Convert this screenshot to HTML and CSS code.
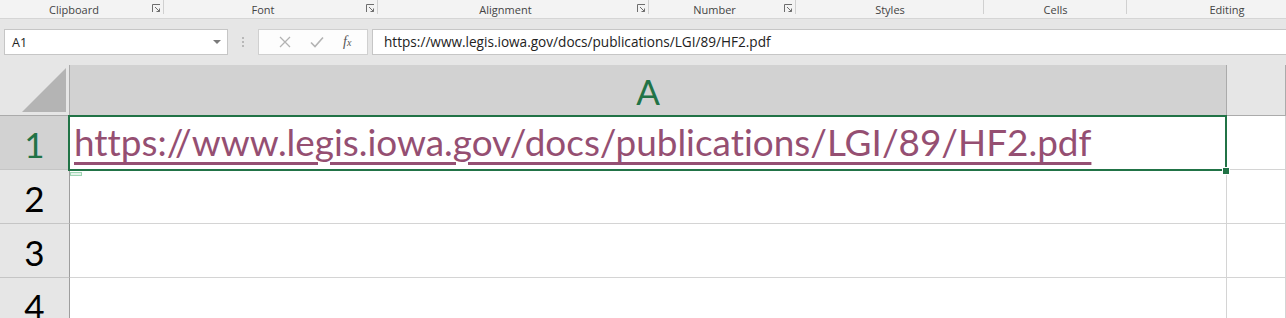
FILE: index.html
```html
<!DOCTYPE html>
<html lang="en">

<head>
  <meta charset="UTF-8">
  <title>Book1 - Excel</title>
  <link rel="stylesheet" href="styles.css">
</head>

<body>
  <!-- ribbon group labels -->
  <div class="ribbon-labels">
    <div class="group g-clipboard"><span class="label">Clipboard</span>
      <svg class="launcher" width="9" height="9" viewBox="0 0 9 9"><path d="M0.5 8V0.5H8" fill="none" stroke="#6d6d6d"/><path d="M3 3L7.5 7.5M7.5 4.5V7.5H4.5" fill="none" stroke="#6d6d6d"/></svg>
    </div>
    <div class="group g-font"><span class="label">Font</span>
      <svg class="launcher" width="9" height="9" viewBox="0 0 9 9"><path d="M0.5 8V0.5H8" fill="none" stroke="#6d6d6d"/><path d="M3 3L7.5 7.5M7.5 4.5V7.5H4.5" fill="none" stroke="#6d6d6d"/></svg>
    </div>
    <div class="group g-alignment"><span class="label">Alignment</span>
      <svg class="launcher" width="9" height="9" viewBox="0 0 9 9"><path d="M0.5 8V0.5H8" fill="none" stroke="#6d6d6d"/><path d="M3 3L7.5 7.5M7.5 4.5V7.5H4.5" fill="none" stroke="#6d6d6d"/></svg>
    </div>
    <div class="group g-number"><span class="label">Number</span>
      <svg class="launcher" width="9" height="9" viewBox="0 0 9 9"><path d="M0.5 8V0.5H8" fill="none" stroke="#6d6d6d"/><path d="M3 3L7.5 7.5M7.5 4.5V7.5H4.5" fill="none" stroke="#6d6d6d"/></svg>
    </div>
    <div class="group g-styles"><span class="label">Styles</span></div>
    <div class="group g-cells"><span class="label">Cells</span></div>
    <div class="group g-editing"><span class="label">Editing</span></div>
  </div>

  <!-- formula bar -->
  <div class="formula-bar">
    <div class="name-box">
      <span>A1</span>
      <svg class="caret" width="8" height="4" viewBox="0 0 8 4"><path d="M0 0H8L4 4Z" fill="#7a7a7a"/></svg>
    </div>
    <div class="grip"><i></i><i></i><i></i></div>
    <div class="fx-box">
      <svg width="12" height="12" viewBox="0 0 12 12"><path d="M1 1L11 11M11 1L1 11" stroke="#b3b3b3" stroke-width="1.3"/></svg>
      <svg width="14" height="12" viewBox="0 0 14 12"><path d="M1 6.5L5 10.5L13 1.5" fill="none" stroke="#b3b3b3" stroke-width="1.6"/></svg>
      <span class="fx">f<small>x</small></span>
    </div>
    <div class="formula-input">https://www.legis.iowa.gov/docs/publications/LGI/89/HF2.pdf</div>
  </div>

  <!-- worksheet -->
  <div class="sheet">
    <div class="corner"><span class="corner-tri"></span></div>
    <div class="col-head selected">A</div>
    <div class="col-head">&nbsp;</div>

    <div class="row-head selected">1</div>
    <div class="cell"><a class="link" href="#">https://www.legis.iowa.gov/docs/publications/LGI/89/HF2.pdf</a></div>
    <div class="cell"></div>

    <div class="row-head">2</div>
    <div class="cell"></div>
    <div class="cell"></div>

    <div class="row-head">3</div>
    <div class="cell"></div>
    <div class="cell"></div>

    <div class="row-head">4</div>
    <div class="cell"></div>
    <div class="cell"></div>

    <!-- active cell frame -->
    <div class="selection"></div>
    <div class="fill-handle"></div>
    <div class="paste-hint"></div>
  </div>
</body>

</html>
```

FILE: styles.css
```css
* {
  margin: 0;
  padding: 0;
  box-sizing: border-box;
}

body {
  width: 1286px;
  height: 318px;
  overflow: hidden;
  background-color: #e6e6e6;
  font-family: 'Open Sans', 'Noto Sans', Arial, sans-serif;
  color: #444;
}

/* ribbon labels */
.ribbon-labels {
  display: flex;
  height: 19px;
  background-color: #f3f3f3;
  border-bottom: 1px solid #d5d5d5;
  overflow: hidden;
}

.group {
  position: relative;
  display: flex;
  flex: none;
  height: 18px;
  padding-right: 16px;
}

.group::after {
  content: '';
  position: absolute;
  right: 0;
  top: 0;
  width: 1px;
  height: 14px;
  background-color: #d0d0d0;
}

.label {
  flex: 1;
  text-align: center;
  font-size: 11px;
  line-height: 19px;
  color: #444;
}

.launcher {
  position: absolute;
  right: 3px;
  top: 4px;
}

.g-clipboard { width: 164px; }
.g-font { width: 214px; }
.g-alignment { width: 271px; }
.g-number { width: 147px; }
.g-styles { width: 188px; padding-right: 0; }
.g-cells { width: 143px; padding-right: 0; }
.g-editing { width: 200px; padding-right: 0; }
.g-editing::after { display: none; }

/* formula bar */
.formula-bar {
  display: flex;
  align-items: center;
  height: 26px;
  margin: 10px 0 10px 4px;
}

.name-box {
  display: flex;
  align-items: center;
  justify-content: space-between;
  width: 224px;
  height: 26px;
  padding: 0 6px 0 7px;
  background-color: #fff;
  border: 1px solid #c6c6c6;
  font-size: 12.5px;
  color: #222;
}

.grip {
  display: flex;
  flex-direction: column;
  gap: 2px;
  width: 30px;
  align-items: center;
}

.grip i {
  display: block;
  width: 2px;
  height: 2px;
  background-color: #b8b8b8;
}

.fx-box {
  display: flex;
  align-items: center;
  justify-content: space-around;
  width: 110px;
  height: 26px;
  padding: 0 6px 0 10px;
  background-color: #fdfdfd;
  border: 1px solid #d0d0d0;
}

.fx {
  font-family: 'Liberation Serif', 'DejaVu Serif', serif;
  font-style: italic;
  font-size: 14px;
  color: #555;
}

.fx small {
  font-size: 10px;
}

.formula-input {
  flex: 1;
  height: 26px;
  margin-left: 4px;
  padding-left: 11px;
  background-color: #fff;
  border: 1px solid #c6c6c6;
  border-right: none;
  font-size: 13.6px;
  line-height: 24px;
  color: #222;
}

/* worksheet */
.sheet {
  position: relative;
  display: grid;
  grid-template-columns: 70px 1157px 1fr;
  grid-template-rows: 51px repeat(4, 54px);
  height: 253px;
  overflow: hidden;
  font-family: Lato, 'Open Sans', sans-serif;
  font-variant-ligatures: none;
}

.corner {
  position: relative;
  background-color: #e6e6e6;
  border-right: 1px solid #ababab;
  border-bottom: 1px solid #ababab;
}

.corner-tri {
  position: absolute;
  right: 3px;
  bottom: 3px;
  width: 44px;
  height: 44px;
  background-color: #b4b4b4;
  clip-path: polygon(100% 0, 100% 100%, 0 100%);
}

.col-head {
  background-color: #e6e6e6;
  border-right: 1px solid #ababab;
  border-bottom: 1px solid #ababab;
  text-align: center;
  font-size: 35px;
  line-height: 52px;
  color: #262626;
}

.col-head.selected {
  background-color: #d2d2d2;
  color: #217346;
}

.row-head {
  background-color: #e6e6e6;
  border-right: 1px solid #9e9e9e;
  border-bottom: 1px solid #c5c5c5;
  text-align: center;
  font-size: 35px;
  line-height: 56px;
  color: #000;
}

.row-head.selected {
  background-color: #d2d2d2;
  color: #217346;
}

.cell {
  background-color: #fff;
  border-right: 1px solid #d4d4d4;
  border-bottom: 1px solid #d4d4d4;
  overflow: visible;
  white-space: nowrap;
}

.link {
  display: inline-block;
  padding-left: 4px;
  font-size: 36.9px;
  line-height: 52px;
  color: #954f72;
  text-decoration: underline;
  text-decoration-thickness: 3px;
  text-underline-offset: 6px;
}

.selection {
  position: absolute;
  left: 68px;
  top: 50px;
  width: 1159px;
  height: 56px;
  border: 2px solid #217346;
  pointer-events: none;
}

.fill-handle {
  position: absolute;
  left: 1222px;
  top: 102px;
  width: 8px;
  height: 8px;
  background-color: #217346;
  border: 1px solid #fff;
}

.paste-hint {
  position: absolute;
  left: 70px;
  top: 107px;
  width: 12px;
  height: 4px;
  border: 1px solid #9fd5b4;
  background-color: #e3f3e9;
}
```
